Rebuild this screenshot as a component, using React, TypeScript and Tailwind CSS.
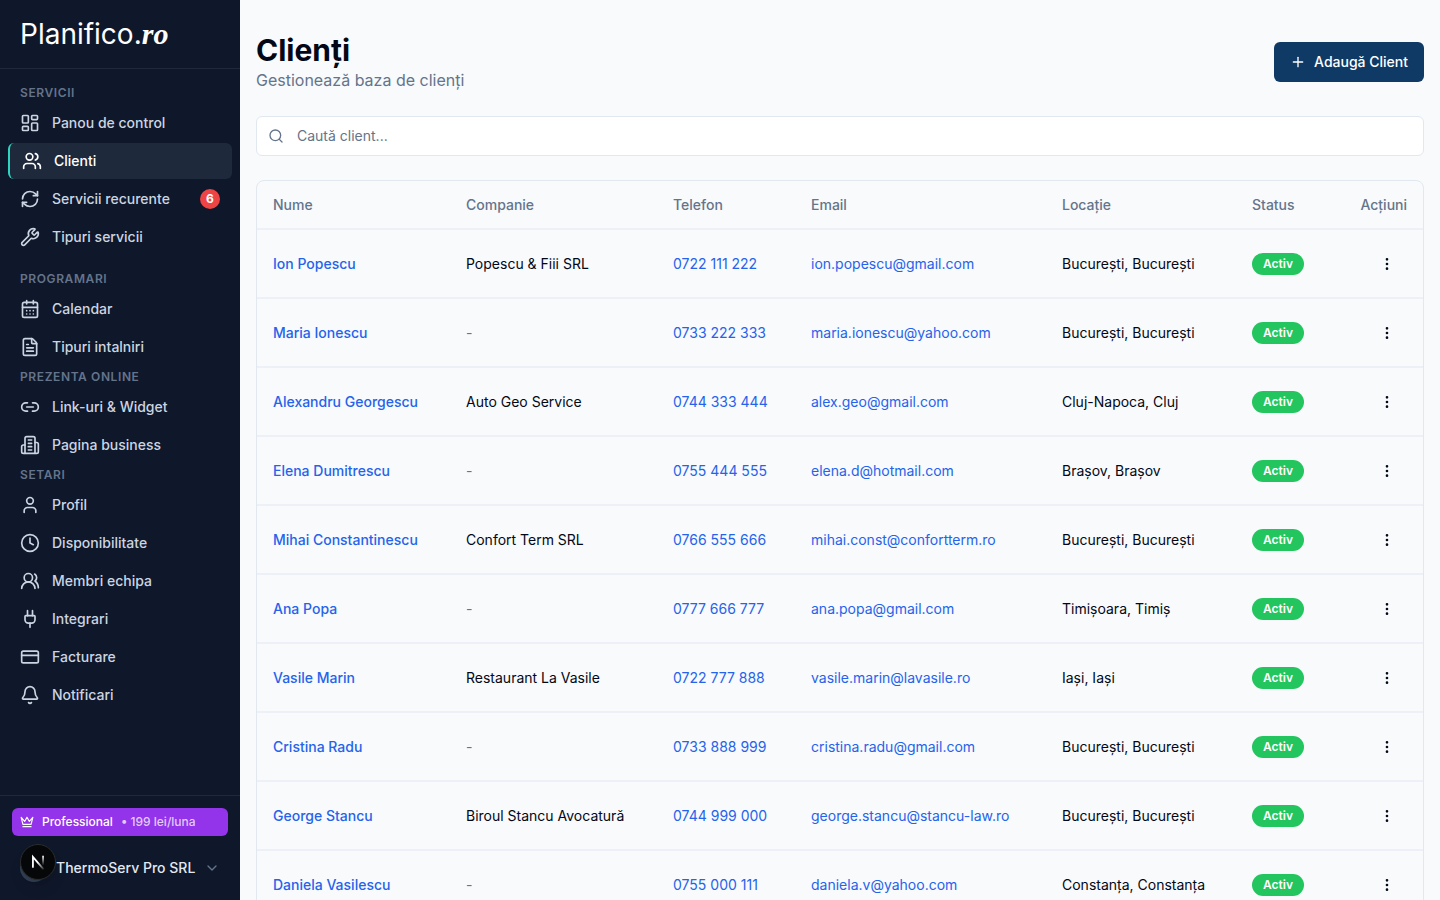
import {
  Bell,
  CalendarDays,
  ChevronDown,
  Clock,
  CreditCard,
  FileText,
  LayoutDashboard,
  Link2,
  MoreVertical,
  Plug,
  Plus,
  RefreshCw,
  Search,
  User,
  Users,
  UsersRound,
  Wrench,
} from "lucide-react";
import type { ComponentType } from "react";

type IconType = ComponentType<{ className?: string }>;

const BuildingIcon = ({ className }: { className?: string }) => (
  <svg
    className={className}
    viewBox="0 0 24 24"
    fill="none"
    stroke="currentColor"
    strokeWidth="2"
    strokeLinecap="round"
    strokeLinejoin="round"
  >
    <path d="M6 22V4a2 2 0 0 1 2-2h8a2 2 0 0 1 2 2v18Z" />
    <path d="M6 12H4a2 2 0 0 0-2 2v6a2 2 0 0 0 2 2h2" />
    <path d="M18 9h2a2 2 0 0 1 2 2v9a2 2 0 0 1-2 2h-2" />
    <path d="M10 6h4M10 10h4M10 14h4M10 18h4" />
  </svg>
);

const CrownIcon = ({ className }: { className?: string }) => (
  <svg
    className={className}
    viewBox="0 0 24 24"
    fill="none"
    stroke="currentColor"
    strokeWidth="2"
    strokeLinecap="round"
    strokeLinejoin="round"
  >
    <path d="m2 4 3 12h14l3-12-6 7-4-7-4 7-6-7zm3 16h14" />
  </svg>
);

interface NavItem {
  label: string;
  icon: IconType;
  active?: boolean;
  badge?: number;
}

const sections: { title: string; spacing: string; items: NavItem[] }[] = [
  {
    title: "Servicii",
    spacing: "mb-4",
    items: [
      { label: "Panou de control", icon: LayoutDashboard },
      { label: "Clienti", icon: Users, active: true },
      { label: "Servicii recurente", icon: RefreshCw, badge: 6 },
      { label: "Tipuri servicii", icon: Wrench },
    ],
  },
  {
    title: "Programari",
    spacing: "mb-1",
    items: [
      { label: "Calendar", icon: CalendarDays },
      { label: "Tipuri intalniri", icon: FileText },
    ],
  },
  {
    title: "Prezenta online",
    spacing: "mb-1",
    items: [
      { label: "Link-uri & Widget", icon: Link2 },
      { label: "Pagina business", icon: BuildingIcon },
    ],
  },
  {
    title: "Setari",
    spacing: "mb-1",
    items: [
      { label: "Profil", icon: User },
      { label: "Disponibilitate", icon: Clock },
      { label: "Membri echipa", icon: UsersRound },
      { label: "Integrari", icon: Plug },
      { label: "Facturare", icon: CreditCard },
      { label: "Notificari", icon: Bell },
    ],
  },
];

const clients = [
  { name: "Ion Popescu", company: "Popescu & Fiii SRL", phone: "0722 111 222", email: "ion.popescu@gmail.com", location: "București, București" },
  { name: "Maria Ionescu", company: "", phone: "0733 222 333", email: "maria.ionescu@yahoo.com", location: "București, București" },
  { name: "Alexandru Georgescu", company: "Auto Geo Service", phone: "0744 333 444", email: "alex.geo@gmail.com", location: "Cluj-Napoca, Cluj" },
  { name: "Elena Dumitrescu", company: "", phone: "0755 444 555", email: "elena.d@hotmail.com", location: "Brașov, Brașov" },
  { name: "Mihai Constantinescu", company: "Confort Term SRL", phone: "0766 555 666", email: "mihai.const@confortterm.ro", location: "București, București" },
  { name: "Ana Popa", company: "", phone: "0777 666 777", email: "ana.popa@gmail.com", location: "Timișoara, Timiș" },
  { name: "Vasile Marin", company: "Restaurant La Vasile", phone: "0722 777 888", email: "vasile.marin@lavasile.ro", location: "Iași, Iași" },
  { name: "Cristina Radu", company: "", phone: "0733 888 999", email: "cristina.radu@gmail.com", location: "București, București" },
  { name: "George Stancu", company: "Biroul Stancu Avocatură", phone: "0744 999 000", email: "george.stancu@stancu-law.ro", location: "București, București" },
  { name: "Daniela Vasilescu", company: "", phone: "0755 000 111", email: "daniela.v@yahoo.com", location: "Constanța, Constanța" },
];

const NavLink = ({ item }: { item: NavItem }) => {
  const Icon = item.icon;
  return (
    <a
      href="#"
      className={
        item.active
          ? "flex h-9 items-center gap-3 rounded-md border-l-2 border-[#2dd4bf] bg-[#1e293b] px-3 text-sm font-medium text-white"
          : "flex h-9 items-center gap-3 rounded-md px-3 text-sm font-medium text-[#cbd5e1] hover:bg-[#1e293b]"
      }
    >
      <Icon className="size-5 shrink-0" />
      <span className="flex-1">{item.label}</span>
      {item.badge && (
        <span className="flex size-5 items-center justify-center rounded-full bg-[#ef4444] text-xs font-bold text-white">
          {item.badge}
        </span>
      )}
    </a>
  );
};

const Sidebar = () => (
  <aside className="sticky top-0 flex h-screen w-60 shrink-0 flex-col bg-[#0f172a]">
    <div className="flex h-[69px] shrink-0 items-center border-b border-[#1e293b] px-5">
      <a href="#" aria-label="Planifico.ro" className="flex items-baseline text-white">
        <span className="text-[28px] leading-8">Planifico.</span>
        <span className="font-['Liberation_Serif',serif] text-[30px] leading-8 font-bold italic">ro</span>
      </a>
    </div>

    <nav className="min-h-0 flex-1 overflow-hidden px-2 pt-4">
      {sections.map((section) => (
        <div key={section.title} className={section.spacing}>
          <h2 className="mb-1 px-3 text-xs font-semibold tracking-wider text-[#64748b] uppercase">
            {section.title}
          </h2>
          <div className="flex flex-col gap-0.5">
            {section.items.map((item) => (
              <NavLink key={item.label} item={item} />
            ))}
          </div>
        </div>
      ))}
    </nav>

    <div className="border-t border-[#1e293b] p-3 pb-2.5">
      <a href="#" className="flex h-7 items-center gap-2 rounded-md bg-[#9333ea] px-2 text-xs font-medium text-white">
        <CrownIcon className="size-3.5" />
        <span>Professional</span>
        <span className="text-white/75">• 199 lei/luna</span>
      </a>
      <div className="relative mt-2.5">
        <button className="flex h-11 w-full items-center gap-2 rounded-md px-2 text-left">
          <span className="size-7 shrink-0 rounded-full bg-[#334155]" />
          <span className="flex-1 truncate text-sm font-medium text-[#e2e8f0]">ThermoServ Pro SRL</span>
          <ChevronDown className="size-4 text-[#64748b]" />
        </button>
        <DevBadge />
      </div>
    </div>
  </aside>
);

const DevBadge = () => (
  <button
    aria-label="Next.js"
    className="absolute -top-0.5 left-2 flex size-9 items-center justify-center rounded-full border border-[#2c2c2c] bg-[#060709] shadow-lg"
  >
    <svg className="size-[18px]" viewBox="0 0 16 16" fill="none">
      <defs>
        <linearGradient id="nDiagonal" x1="8" y1="8" x2="14" y2="15" gradientUnits="userSpaceOnUse">
          <stop stopColor="#fff" />
          <stop offset="1" stopColor="#fff" stopOpacity="0" />
        </linearGradient>
        <linearGradient id="nStem" x1="12" y1="2" x2="12" y2="11" gradientUnits="userSpaceOnUse">
          <stop stopColor="#fff" />
          <stop offset="1" stopColor="#fff" stopOpacity="0" />
        </linearGradient>
      </defs>
      <path d="M3.5 13V3.5L13 14.5" stroke="url(#nDiagonal)" strokeWidth="1.6" />
      <path d="M12.5 2.5v9" stroke="url(#nStem)" strokeWidth="1.6" />
    </svg>
  </button>
);

const ClientsTable = () => (
  <div className="overflow-hidden rounded-lg border border-[#e2e8f0]">
    <table className="w-full table-fixed text-left text-sm">
      <thead>
        <tr className="border-b-2 border-[#edf0f6] text-[#64748b]">
          <th className="h-12 w-[193px] px-4 font-medium">Nume</th>
          <th className="h-12 w-[207px] px-4 font-medium">Companie</th>
          <th className="h-12 w-[138px] px-4 font-medium">Telefon</th>
          <th className="h-12 w-[251px] px-4 font-medium">Email</th>
          <th className="h-12 w-[190px] px-4 font-medium">Locație</th>
          <th className="h-12 w-[101px] px-4 font-medium">Status</th>
          <th className="h-12 w-[86px] px-4 text-right font-medium">Acțiuni</th>
        </tr>
      </thead>
      <tbody>
        {clients.map((client) => (
          <tr key={client.name} className="border-b-2 border-[#edf0f6]">
            <td className="p-4">
              <a href="#" className="font-medium text-[#2563eb]">{client.name}</a>
            </td>
            <td className="p-4">
              {client.company || <span className="text-[#64748b]">-</span>}
            </td>
            <td className="p-4">
              <a href="#" className="text-[#2563eb]">{client.phone}</a>
            </td>
            <td className="p-4">
              <a href="#" className="text-[#2563eb]">{client.email}</a>
            </td>
            <td className="p-4">{client.location}</td>
            <td className="p-4">
              <span className="inline-flex rounded-full border border-transparent bg-[#22c55e] px-2.5 py-0.5 text-xs font-semibold text-white">
                Activ
              </span>
            </td>
            <td className="p-4">
              <button
                aria-label={`Acțiuni ${client.name}`}
                className="ml-auto flex h-[35px] w-10 items-center justify-center rounded-md"
              >
                <MoreVertical className="size-4" />
              </button>
            </td>
          </tr>
        ))}
      </tbody>
    </table>
  </div>
);

export default function App() {
  return (
    <div className="flex min-h-screen bg-[#f8fafc] font-[Inter,sans-serif] text-[#020817]">
      <Sidebar />
      <main className="min-w-0 flex-1 px-4 py-8">
        <header className="mb-6 flex items-center justify-between">
          <div>
            <h1 className="text-3xl font-bold">Clienți</h1>
            <p className="text-base text-[#64748b]">Gestionează baza de clienți</p>
          </div>
          <button className="flex h-10 items-center gap-2 rounded-md bg-[#0f3a66] px-4 text-sm font-medium text-white">
            <Plus className="size-4" />
            Adaugă Client
          </button>
        </header>

        <label className="mb-6 flex h-10 items-center gap-[13px] rounded-md border border-[#e2e8f0] bg-white px-[11px]">
          <Search className="size-4 text-[#64748b]" />
          <input
            type="text"
            aria-label="Caută client"
            placeholder="Caută client..."
            className="min-w-0 flex-1 bg-transparent text-sm outline-none placeholder:text-[#64748b]"
          />
        </label>

        <ClientsTable />
      </main>
    </div>
  );
}
